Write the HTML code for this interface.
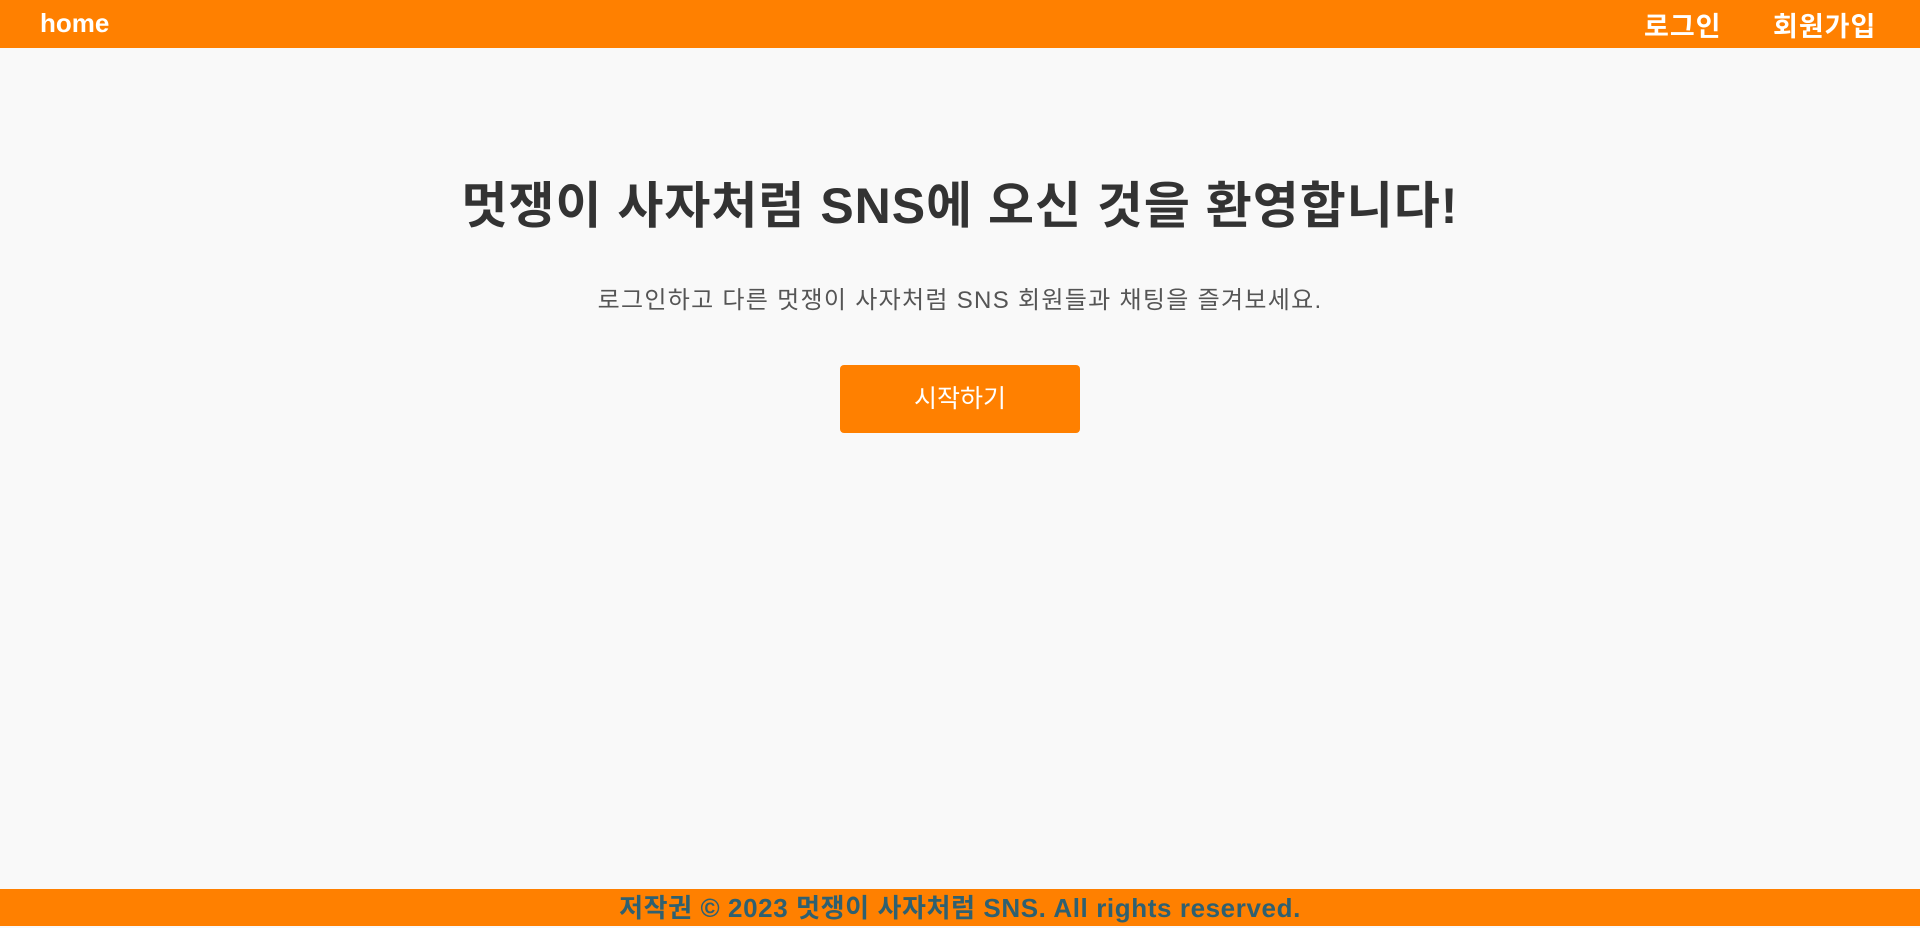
<!DOCTYPE html>
<html><head><meta charset="utf-8"><style>
*{margin:0;padding:0;box-sizing:border-box}
body{width:1920px;height:926px;background:#f9f9f9;font-family:"Liberation Sans","Noto Sans CJK KR",sans-serif;position:relative;overflow:hidden}
header{position:absolute;top:0;left:0;width:1920px;height:48px;background:#ff8000;color:#fff;font-weight:bold;font-size:26px}
.home{position:absolute;left:40px;top:8px}
.nav1{position:absolute;left:1644px;top:5px;font-size:27px;letter-spacing:1px}
.nav2{position:absolute;left:1773px;top:5px;font-size:27px;letter-spacing:1px}
h1{position:absolute;top:166px;left:0;width:1920px;text-align:center;font-size:50px;letter-spacing:1px;color:#333;font-weight:bold}
p{position:absolute;top:280px;left:0;width:1920px;text-align:center;font-size:24px;letter-spacing:1.3px;color:#555}
.btn{position:absolute;left:840px;top:365px;width:240px;height:68px;background:#ff8000;border-radius:4px;color:#fff;font-size:25px;text-align:center;line-height:68px}
footer{position:absolute;top:889px;left:0;width:1920px;height:37px;background:#ff8000;color:#2f6070;font-weight:bold;font-size:26px;letter-spacing:0.6px;text-align:center;line-height:39px}
</style></head><body>
<header><span class="home">home</span><span class="nav1">로그인</span><span class="nav2">회원가입</span></header>
<h1>멋쟁이 사자처럼 SNS에 오신 것을 환영합니다!</h1>
<p>로그인하고 다른 멋쟁이 사자처럼 SNS 회원들과 채팅을 즐겨보세요.</p>
<div class="btn">시작하기</div>
<footer>저작권 © 2023 멋쟁이 사자처럼 SNS. All rights reserved.</footer>
</body></html>
